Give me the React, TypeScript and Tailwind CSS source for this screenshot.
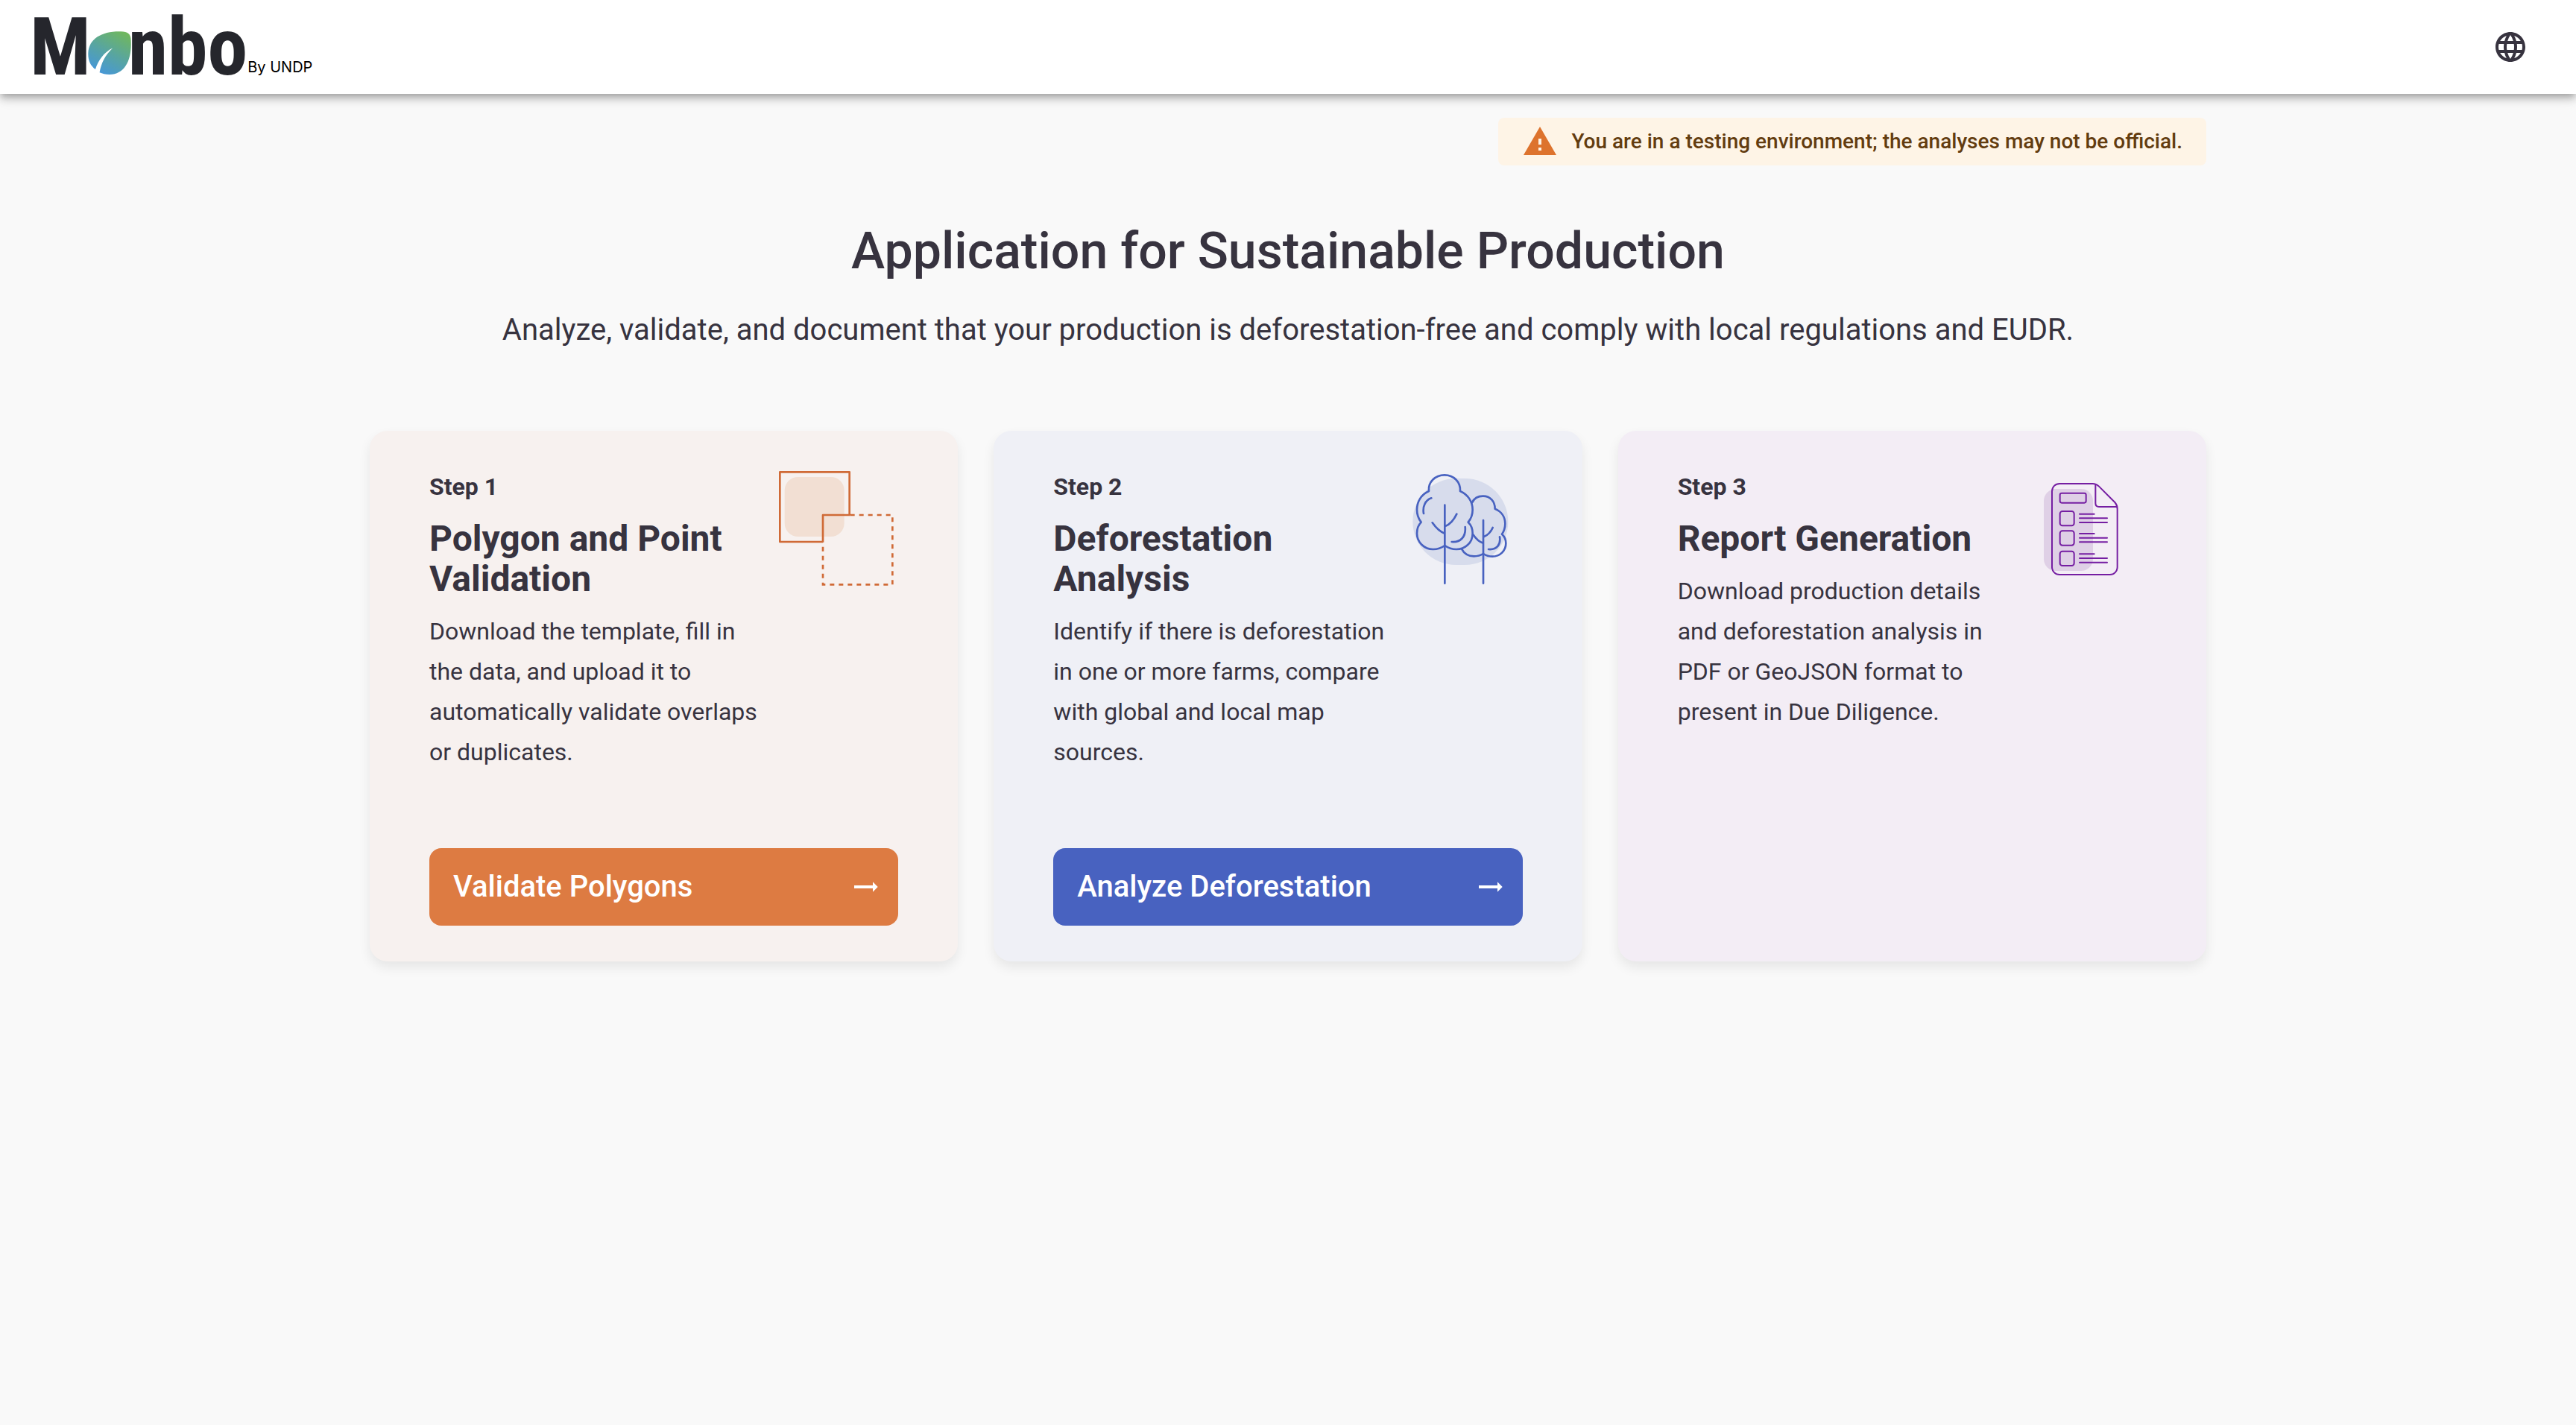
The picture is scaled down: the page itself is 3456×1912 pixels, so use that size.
import type { ReactNode } from "react";

type Step = {
  step: string;
  title: string;
  text: string;
  card: string;
  icon: ReactNode;
  action?: { label: string; color: string };
};

function Logo() {
  return (
    <a href="#" aria-label="Monbo By UNDP" className="flex items-end text-[#25262c]">
      <span className="font-['Roboto_Condensed',Roboto,sans-serif] text-[108px] leading-[78px] font-bold">M</span>
      <svg viewBox="246 127 175 175" className="-mx-1 mb-0.5 size-[58px]" aria-hidden="true">
        <defs>
          <linearGradient id="leaf" x1="0.25" y1="1" x2="0.8" y2="0">
            <stop offset="0" stopColor="#4596dc" />
            <stop offset="0.5" stopColor="#58a5a0" />
            <stop offset="1" stopColor="#70b75e" />
          </linearGradient>
        </defs>
        <path
          fill="url(#leaf)"
          d="M372 128C405 126 421 136 420 166C424 242 396 302 333 302C318 302 304 299 293 294C300 255 315 225 346 195C310 212 288 245 276 281C256 266 246 245 247 215C250 158 300 128 372 128Z"
        />
      </svg>
      <span className="font-['Roboto_Condensed',Roboto,sans-serif] text-[108px] leading-[78px] font-bold">nbo</span>
      <span className="font-[Inter,sans-serif] text-xl leading-6 text-black">By UNDP</span>
    </a>
  );
}

function PolygonsIcon() {
  return (
    <svg viewBox="52 48 504 504" className="size-[168px] shrink-0" fill="none" stroke="#d06a36" strokeWidth="8" aria-hidden="true">
      <rect x="99" y="90" width="240" height="240" rx="54" fill="#f2dfd3" stroke="none" />
      <path d="M253 351H80V70H360V243" strokeLinejoin="round" />
      <path d="M253 351V243H363" strokeLinejoin="round" />
      <path d="M363 243H533V523H253V351" strokeDasharray="18 18" />
    </svg>
  );
}

function TreesIcon() {
  return (
    <svg viewBox="-16 18 504 504" className="size-[168px] shrink-0" fill="none" stroke="#4862c0" strokeWidth="8" strokeLinecap="round" strokeLinejoin="round" aria-hidden="true">
      <rect x="45" y="66" width="384" height="348" rx="174" fill="#d7dcec" stroke="none" />
      <path d="M110 117C106 80 136 52 173 52C210 52 238 80 236 117C266 130 286 158 286 192C286 210 280 228 268 242C280 253 286 270 286 287C286 325 256 351 221 351C204 351 188 346 174 336C160 346 144 351 127 351C91 351 62 322 62 287C62 270 68 253 79 242C68 228 62 210 62 192C62 158 80 130 110 117Z" />
      <path d="M174 173V488M222 209C210 234 198 250 176 258M124 244C138 264 153 280 173 287M120 145C96 153 84 178 89 207M256 261C260 300 238 324 202 321" />
      <path d="M284 163C292 146 308 137 328 137C357 137 376 158 376 188C401 198 417 220 417 248C417 264 413 277 404 290C414 299 420 311 420 327C420 357 396 380 366 380C353 380 341 377 329 369C318 376 306 379 291 379C269 379 251 367 242 350" />
      <path d="M329 234V488M367 264C360 280 349 293 331 301M288 292C300 310 312 321 328 326M395 301C400 332 384 354 350 351" />
    </svg>
  );
}

function ReportIcon() {
  return (
    <svg viewBox="-24 -12 504 504" className="size-[168px] shrink-0" fill="none" stroke="#751ea2" strokeWidth="6" strokeLinecap="round" strokeLinejoin="round" aria-hidden="true">
      <rect x="66" y="78" width="198" height="330" rx="48" fill="#dfd0e6" stroke="none" />
      <path d="M130 57H262C274 57 281 61 288 68L352 132C360 141 362 148 362 158V392C362 410 349 423 332 423H130C112 423 99 410 99 392V88C99 70 112 57 130 57Z" />
      <path d="M274 60V136C274 145 279 150 288 150H359" />
      <rect x="131" y="95" width="105" height="39" rx="7" />
      {[168, 247, 329].map((y) => (
        <g key={y}>
          <rect x="131" y={y} width="57" height="58" rx="10" />
          <path d={`M210 ${y + 11}H269M210 ${y + 28}H321M210 ${y + 45}H321`} />
        </g>
      ))}
    </svg>
  );
}

const steps: Step[] = [
  {
    step: "Step 1",
    title: "Polygon and Point Validation",
    text: "Download the template, fill in the data, and upload it to automatically validate overlaps or duplicates.",
    card: "bg-[#f7f1ef]",
    icon: <PolygonsIcon />,
    action: { label: "Validate Polygons", color: "bg-[#dd7b42]" },
  },
  {
    step: "Step 2",
    title: "Deforestation Analysis",
    text: "Identify if there is deforestation in one or more farms, compare with global and local map sources.",
    card: "bg-[#eff0f6]",
    icon: <TreesIcon />,
    action: { label: "Analyze Deforestation", color: "bg-[#4862c0]" },
  },
  {
    step: "Step 3",
    title: "Report Generation",
    text: "Download production details and deforestation analysis in PDF or GeoJSON format to present in Due Diligence.",
    card: "bg-[#f3edf5]",
    icon: <ReportIcon />,
  },
];

function StepCard({ step, title, text, card, icon, action }: Step) {
  return (
    <article className={`flex flex-col rounded-3xl px-20 py-12 shadow-[0_8px_16px_rgba(0,0,0,0.08)] ${card}`}>
      <div className="flex items-start gap-2">
        <div className="flex flex-1 flex-col gap-4">
          <p className="text-[32px] leading-[54px] font-bold">{step}</p>
          <h2 className="text-[48px] leading-[54px] font-bold">{title}</h2>
          <p className="text-[32px] leading-[54px]">{text}</p>
        </div>
        {icon}
      </div>
      {action && (
        <div className="mt-auto pt-[102px]">
          <button type="button" className={`flex h-[104px] w-full items-center justify-between rounded-2xl pr-5 pl-8 text-[40px] font-medium text-white ${action.color}`}>
            {action.label}
            <svg viewBox="0 0 48 48" className="size-12" fill="currentColor" aria-hidden="true">
              <path d="M9 22H34V17.3L40.7 24L34 30.7V26H9z" />
            </svg>
          </button>
        </div>
      )}
    </article>
  );
}

export default function App() {
  return (
    <div className="min-h-screen bg-[#f9f9f9] font-[Roboto,sans-serif] text-[#37333f]">
      <header className="relative flex h-[126px] items-center justify-between bg-white pr-16 pl-10 shadow-[0_4px_8px_-2px_rgba(0,0,0,0.2),0_8px_10px_rgba(0,0,0,0.14),0_2px_20px_rgba(0,0,0,0.12)]">
        <Logo />
        <button type="button" aria-label="Change language">
          <svg viewBox="0 0 24 24" className="size-12" fill="currentColor" aria-hidden="true">
            <path d="M11.99 2C6.47 2 2 6.48 2 12s4.47 10 9.99 10C17.52 22 22 17.52 22 12S17.52 2 11.99 2zm6.93 6h-2.95c-.32-1.25-.78-2.45-1.38-3.56 1.84.63 3.37 1.91 4.33 3.56zM12 4.04c.83 1.2 1.48 2.53 1.91 3.96h-3.82c.43-1.43 1.08-2.76 1.91-3.96zM4.26 14C4.1 13.36 4 12.69 4 12s.1-1.36.26-2h3.38c-.08.66-.14 1.32-.14 2s.06 1.34.14 2H4.26zm.82 2h2.95c.32 1.25.78 2.45 1.38 3.56-1.84-.63-3.37-1.9-4.33-3.56zm2.95-8H5.08c.96-1.66 2.49-2.93 4.33-3.56C8.81 5.55 8.35 6.75 8.03 8zM12 19.96c-.83-1.2-1.48-2.53-1.91-3.96h3.82c-.43 1.43-1.08 2.76-1.91 3.96zM14.34 14H9.66c-.09-.66-.16-1.32-.16-2s.07-1.35.16-2h4.68c.09.65.16 1.32.16 2s-.07 1.34-.16 2zm.25 5.56c.6-1.11 1.06-2.31 1.38-3.56h2.95c-.96 1.65-2.49 2.93-4.33 3.56zM16.36 14c.08-.66.14-1.32.14-2s-.06-1.34-.14-2h3.38c.16.64.26 1.31.26 2s-.1 1.36-.26 2h-3.38z" />
          </svg>
        </button>
      </header>
      <main className="mx-auto max-w-[2464px] pt-8">
        <div role="status" className="ml-auto flex h-16 w-fit items-center gap-[18px] rounded-lg bg-[#fef4e6] px-8 text-[28px] font-medium text-[#633c0f]">
          <svg viewBox="0 0 24 24" className="size-12" fill="#dd732d" aria-hidden="true">
            <path d="M1 21h22L12 2 1 21zm12-3h-2v-2h2v2zm0-4h-2v-4h2v4z" />
          </svg>
          You are in a testing environment; the analyses may not be official.
        </div>
        <h1 className="mt-[74px] text-center text-[68px] leading-[82px] font-medium">Application for Sustainable Production</h1>
        <p className="mt-8 text-center text-[40px] leading-[66px]">
          Analyze, validate, and document that your production is deforestation-free and comply with local regulations and EUDR.
        </p>
        <div className="mt-[102px] grid grid-cols-3 gap-12">
          {steps.map((item) => (
            <StepCard key={item.step} {...item} />
          ))}
        </div>
      </main>
    </div>
  );
}
